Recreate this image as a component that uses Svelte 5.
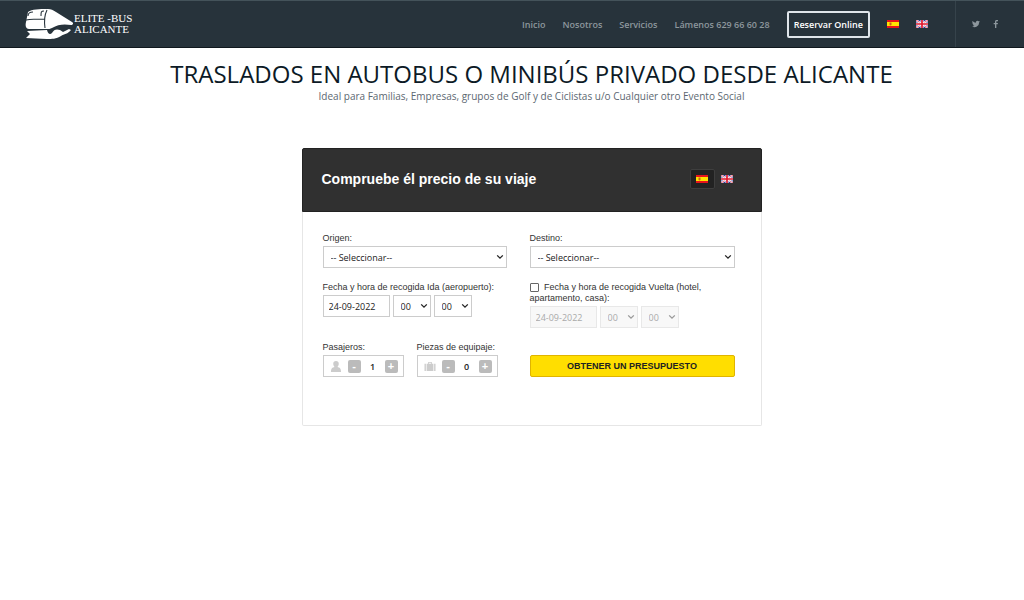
<script>
    const places = ['-- Seleccionar--', 'Aeropuerto Alicante', 'Benidorm', 'Torrevieja'];
    const links = ['Inicio', 'Nosotros', 'Servicios', 'Lámenos 629 66 60 28'];
    const hours = Array.from({length: 24}, (_, i) => String(i).padStart(2, '0'));
    const minutes = Array.from({length: 12}, (_, i) => String(i * 5).padStart(2, '0'));

    let origin = $state(places[0]);
    let destination = $state(places[0]);
    let outDate = $state('24-09-2022');
    let backDate = $state('24-09-2022');
    let roundTrip = $state(false);
    let passengers = $state(1);
    let luggage = $state(0);
</script>

{#snippet flagEs()}
    <svg class="flag" viewBox="0 0 24 16" preserveAspectRatio="none" aria-hidden="true">
        <path fill="#e8141c" d="M0 0h24v16H0z" />
        <path fill="#ffe400" d="M0 4h24v8H0z" />
        <path fill="#c8641c" d="M5 5h4v5l-2 1-2-1z" />
    </svg>
{/snippet}

{#snippet flagUk()}
    <svg class="flag" viewBox="0 0 24 16" preserveAspectRatio="none" aria-hidden="true">
        <path fill="#27349c" d="M0 0h24v16H0z" />
        <path stroke="#fff" stroke-width="4" d="M0 0l24 16M24 0L0 16" />
        <path stroke="#e0263c" stroke-width="1.5" d="M0 0l24 16M24 0L0 16" />
        <path stroke="#fff" stroke-width="6" d="M12 0v16M0 8h24" />
        <path stroke="#e0162c" stroke-width="3.4" d="M12 0v16M0 8h24" />
    </svg>
{/snippet}

{#snippet chevron()}
    <svg class="chevron" viewBox="0 0 8 6" aria-hidden="true">
        <path fill="none" stroke="currentColor" stroke-width="1.3" d="M1.2 1.4L4 4.2l2.800-2.800" />
    </svg>
{/snippet}

{#snippet time(label, options, disabled)}
    <span class="select small">
        <select aria-label={label} {disabled}>
            {#each options as option}
                <option>{option}</option>
            {/each}
        </select>
        {@render chevron()}
    </span>
{/snippet}

<header>
    <a class="logo" href="#inicio">
        <svg viewBox="0 0 50 32" aria-hidden="true">
            <path fill="#fff" d="M4 4C8 1 15 1 24 1c3 0 5 1 8 3l16 10c2 1 1 3-1 3-6-1-13-1-19 3-2 1-3 1-5 1H5c-3 0-4-3-3-7z" />
            <path fill="#fff" d="M3 23l20-1c1 4 3 5 5 3 2-4 5-4 8-3l3 2 6-3 2 1c-3 4-7 4-10 6-5 3-9 3-14 3-8 0-14-1-21-1l4-4z" />
            <path fill="none" stroke="#27333b" stroke-width="1.1" d="M21 20c-1-7-1-12 2-18M2 12c6-1 12-1 19-1M4 8c0-3 2-4 5-4M17 8c0-4 0-5 3-5" />
        </svg>
        <span>ELITE -BUS<br />ALICANTE</span>
    </a>
    <nav>
        {#each links as link}
            <a href="#menu">{link}</a>
        {/each}
        <a class="book" href="#reservar">Reservar Online</a>
        <a href="#es" aria-label="Español">{@render flagEs()}</a>
        <a href="#en" aria-label="English">{@render flagUk()}</a>
    </nav>
    <div class="social">
        <a href="#twitter" aria-label="Twitter">
            <svg viewBox="0 0 24 24"><path fill="currentColor" d="M24 4.6a10 10 0 0 1-2.8.8 5 5 0 0 0 2.1-2.7 10 10 0 0 1-3.1 1.2 4.9 4.9 0 0 0-8.4 4.5A14 14 0 0 1 1.7 3.1a4.9 4.9 0 0 0 1.5 6.6 5 5 0 0 1-2.2-.6 4.9 4.9 0 0 0 3.9 4.9 5 5 0 0 1-2.2.1 4.9 4.9 0 0 0 4.6 3.4A10 10 0 0 1 0 19.5 14 14 0 0 0 21.500 7.1 10 10 0 0 0 24 4.6z" /></svg>
        </a>
        <a href="#facebook" aria-label="Facebook">
            <svg viewBox="0 0 24 24"><path fill="currentColor" d="M9 24V13H5V9h4V6c0-4 2-6 5-6h4v4h-3c-2 0-2 1-2 2v3h5l-1 4h-4v11z" /></svg>
        </a>
    </div>
</header>

<main>
    <h1>TRASLADOS EN AUTOBUS O MINIBÚS PRIVADO DESDE ALICANTE</h1>
    <p class="intro">Ideal para Familias, Empresas, grupos de Golf y de Ciclistas u/o Cualquier otro Evento Social</p>

    <section class="card">
        <div class="card-head">
            <h2>Compruebe él precio de su viaje</h2>
            <button class="lang active" type="button" aria-label="Español">{@render flagEs()}</button>
            <button class="lang" type="button" aria-label="English">{@render flagUk()}</button>
        </div>
        <form onsubmit={(ev) => ev.preventDefault()}>
            <div class="field">
                <label for="origin">Origen:</label>
                <span class="select">
                    <select id="origin" bind:value={origin}>
                        {#each places as place}
                            <option>{place}</option>
                        {/each}
                    </select>
                    {@render chevron()}
                </span>
            </div>
            <div class="field">
                <label for="destination">Destino:</label>
                <span class="select">
                    <select id="destination" bind:value={destination}>
                        {#each places as place}
                            <option>{place}</option>
                        {/each}
                    </select>
                    {@render chevron()}
                </span>
            </div>

            <div class="field">
                <label for="out-date">Fecha y hora de recogida Ida (aeropuerto):</label>
                <div class="row">
                    <input class="date" id="out-date" type="text" bind:value={outDate} />
                    {@render time('Hora de ida', hours, false)}
                    {@render time('Minutos de ida', minutes, false)}
                </div>
            </div>
            <div class="field">
                <label>
                    <input type="checkbox" bind:checked={roundTrip} />
                    Fecha y hora de recogida Vuelta (hotel, apartamento, casa):
                </label>
                <div class="row">
                    <input class="date" type="text" aria-label="Fecha de vuelta" bind:value={backDate} disabled={!roundTrip} />
                    {@render time('Hora de vuelta', hours, !roundTrip)}
                    {@render time('Minutos de vuelta', minutes, !roundTrip)}
                </div>
            </div>

            <div class="row counters">
                <div class="field">
                    <label for="passengers">Pasajeros:</label>
                    <div class="counter">
                        <svg viewBox="0 0 12 12" aria-hidden="true"><path fill="currentColor" d="M6 0c2 0 3 1 3 3S8 6 7.600 6.500c2.400.5 3.900 1.500 3.900 5.500H.5c0-4 1.500-5 3.900-5.500C4 6 3 5 3 3s1-3 3-3z" /></svg>
                        <button type="button" aria-label="Menos pasajeros" onclick={() => passengers = Math.max(1, passengers - 1)}>-</button>
                        <input id="passengers" type="text" bind:value={passengers} />
                        <button type="button" aria-label="Más pasajeros" onclick={() => passengers += 1}>+</button>
                    </div>
                </div>
                <div class="field">
                    <label for="luggage">Piezas de equipaje:</label>
                    <div class="counter">
                        <svg viewBox="0 0 12 12" aria-hidden="true"><path fill="currentColor" d="M0 3h1.500v8H0zM10.500 3H12v8h-1.500zM2.300 3H4V1h4v2h1.700v8H2.300zM5 2v1h2V2z" /></svg>
                        <button type="button" aria-label="Menos equipaje" onclick={() => luggage = Math.max(0, luggage - 1)}>-</button>
                        <input id="luggage" type="text" bind:value={luggage} />
                        <button type="button" aria-label="Más equipaje" onclick={() => luggage += 1}>+</button>
                    </div>
                </div>
            </div>
            <button class="submit" type="submit">OBTENER UN PRESUPUESTO</button>
        </form>
    </section>
</main>

<style>
    :global(body) {
        background: #fff;
        font-family: "Open Sans", sans-serif;
    }

    a {
        color: inherit;
        text-decoration: none;
    }

    svg {
        display: block;
    }

    header {
        display: flex;
        align-items: center;
        box-sizing: border-box;
        height: 48px;
        padding: 0 24px;
        background: #27333b;
        border-top: 1px solid #44535a;
        border-bottom: 1px solid #10181e;
        color: #8d979d;
    }

    .logo {
        display: flex;
        align-items: center;
        color: #fff;
        font-family: "Liberation Serif", serif;
        font-size: 11px;
        line-height: 11px;
    }

    .logo svg {
        width: 50px;
        height: 32px;
    }

    nav {
        display: flex;
        align-items: center;
        gap: 17px;
        margin-left: auto;
        font-size: 9px;
        font-weight: 600;
    }

    .book {
        padding: 6px 5px;
        border: 2px solid #dfe5ea;
        border-radius: 2px;
        color: #fff;
        line-height: 11px;
    }

    .flag {
        width: 12px;
        height: 8px;
    }

    .social {
        display: flex;
        align-items: center;
        gap: 12px;
        align-self: stretch;
        margin-left: 27px;
        padding-left: 16px;
        border-left: 1px solid #36434b;
    }

    .social svg {
        width: 8px;
        height: 8px;
    }

    main {
        display: flex;
        flex-direction: column;
        align-items: center;
        padding: 10px 0 40px 39px;
    }

    h1 {
        margin: 0;
        color: #0c1a26;
        font-size: 24px;
        font-weight: 400;
        line-height: 32px;
    }

    .intro {
        margin: 0 0 46px;
        color: #5c6771;
        font-size: 10px;
        line-height: 12px;
    }

    .card {
        width: 460px;
        max-width: 100%;
        font-family: "Liberation Sans", sans-serif;
    }

    .card-head {
        display: flex;
        align-items: center;
        box-sizing: border-box;
        height: 64px;
        padding: 0 21px 2px 19px;
        background: #303030;
        border: 1px solid #222;
        border-radius: 2px 2px 0 0;
    }

    h2 {
        margin: 0 auto 0 0;
        color: #fff;
        font-size: 14px;
    }

    .lang {
        display: flex;
        align-items: center;
        justify-content: center;
        width: 25px;
        height: 20px;
        padding: 0;
        background: none;
        border: 1px solid transparent;
        border-radius: 2px;
    }

    .lang.active {
        background: #222;
        border-color: #3e3e3e;
    }

    form {
        display: grid;
        grid-template-columns: 184fr 205fr;
        gap: 14px 23px;
        padding: 21px 26px 48px 20px;
        border: 1px solid #e6e6e6;
        border-top: 0;
        border-radius: 0 0 2px 2px;
    }

    .field {
        display: flex;
        flex-direction: column;
        gap: 2px;
    }

    label {
        color: #333;
        font-size: 9px;
        line-height: 11px;
    }

    .row {
        display: flex;
        gap: 3px;
    }

    .select {
        position: relative;
        color: #222;
    }

    .small {
        width: 38px;
    }

    select,
    .date {
        box-sizing: border-box;
        width: 100%;
        height: 22px;
        padding: 0 7px;
        appearance: none;
        background: #fff;
        border: 1px solid #ccc;
        border-radius: 0;
        color: #222;
        font-family: "Open Sans", sans-serif;
        font-size: 9px;
    }

    .date {
        width: 67px;
        padding: 0 5px;
    }

    select:disabled,
    .date:disabled {
        background: #f8f8f8;
        border-color: #e8e8e8;
        color: #aaa;
        opacity: 1;
    }

    select:disabled + .chevron {
        color: #999;
    }

    .chevron {
        position: absolute;
        top: 8px;
        right: 3px;
        width: 8px;
        height: 6px;
        pointer-events: none;
    }

    input[type="checkbox"] {
        width: 9px;
        height: 9px;
        margin: 0 3px 0 0;
        appearance: none;
        background: #fff;
        border: 1px solid #666;
        border-radius: 1px;
        vertical-align: middle;
    }

    input[type="checkbox"]:checked {
        background: #666;
    }

    .counters {
        gap: 13px;
    }

    .counter {
        display: flex;
        align-items: center;
        justify-content: space-between;
        box-sizing: border-box;
        width: 81px;
        height: 22px;
        padding: 0 5px 0 6px;
        border: 1px solid #ccc;
        color: #ccc;
    }

    .counter svg {
        width: 12px;
        height: 11px;
    }

    .counter button {
        width: 13px;
        height: 13px;
        padding: 0;
        background: #bbb;
        border: 0;
        border-radius: 2px;
        color: #fff;
        font: bold 11px/12px "Liberation Sans", sans-serif;
    }

    .counter input {
        width: 12px;
        padding: 0;
        background: none;
        border: 0;
        color: #222;
        font: 600 9px "Open Sans", sans-serif;
        text-align: center;
    }

    .submit {
        align-self: end;
        height: 22px;
        padding: 0;
        background: #ffde00;
        border: 1px solid #e0b400;
        border-radius: 2px;
        color: #222;
        font: bold 9px "Liberation Sans", sans-serif;
    }
</style>
